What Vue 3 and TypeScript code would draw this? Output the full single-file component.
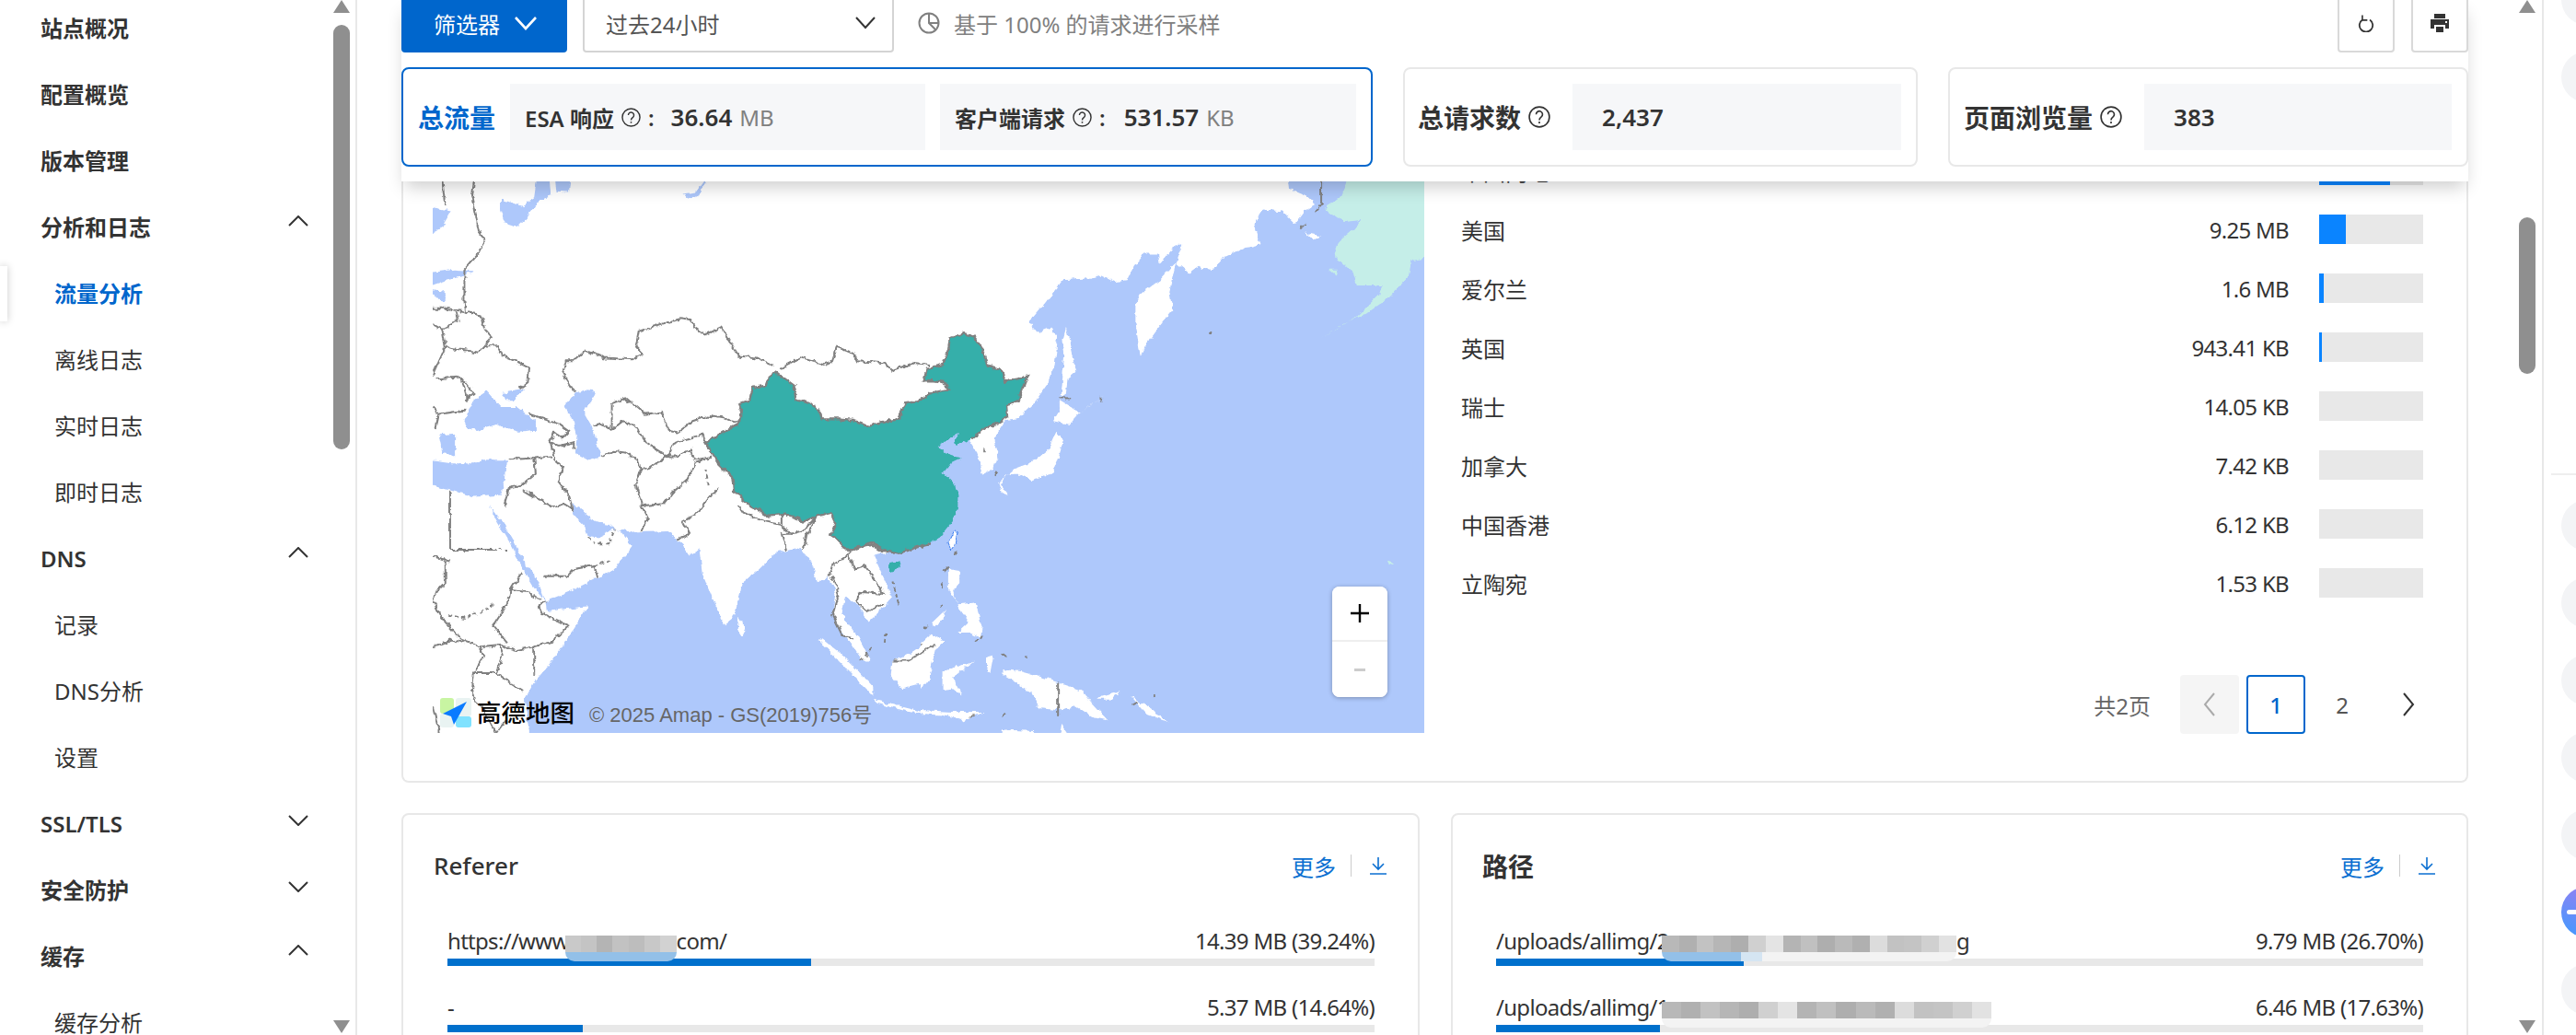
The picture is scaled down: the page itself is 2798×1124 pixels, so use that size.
<script setup lang="ts">
interface NavItem { label: string; level: 1 | 2; bold?: boolean; semi?: boolean; active?: boolean; chevron?: 'up' | 'down' }
const nav: NavItem[] = [
  { label: '站点概况', level: 1, bold: true },
  { label: '配置概览', level: 1, bold: true },
  { label: '版本管理', level: 1, bold: true },
  { label: '分析和日志', level: 1, bold: true, chevron: 'up' },
  { label: '流量分析', level: 2, active: true },
  { label: '离线日志', level: 2 },
  { label: '实时日志', level: 2 },
  { label: '即时日志', level: 2 },
  { label: 'DNS', level: 1, semi: true, chevron: 'up' },
  { label: '记录', level: 2 },
  { label: 'DNS分析', level: 2 },
  { label: '设置', level: 2 },
  { label: 'SSL/TLS', level: 1, semi: true, chevron: 'down' },
  { label: '安全防护', level: 1, bold: true, chevron: 'down' },
  { label: '缓存', level: 1, bold: true, chevron: 'up' },
  { label: '缓存分析', level: 2 },
]

const countries = [
  { name: '中国内地', value: '', pct: 68 },
  { name: '美国', value: '9.25 MB', pct: 25.6 },
  { name: '爱尔兰', value: '1.6 MB', pct: 4.4 },
  { name: '英国', value: '943.41 KB', pct: 2.6 },
  { name: '瑞士', value: '14.05 KB', pct: 0 },
  { name: '加拿大', value: '7.42 KB', pct: 0 },
  { name: '中国香港', value: '6.12 KB', pct: 0 },
  { name: '立陶宛', value: '1.53 KB', pct: 0 },
]

const refTones = ['#c9c9c9', '#c4c4c4', '#b4b4b4', '#c2c2c2', '#bdbdbd', '#c8c8c8', '#d2d2d2']
const pathTones = ['#b8b8b8', '#b0b0b0', '#c2c2c2', '#b6b6b6', '#aeaeae', '#d0d0d0', '#e4e4e4', '#b4b4b4', '#c0c0c0', '#aeaeae', '#bababa', '#b0b0b0', '#dcdcdc', '#c2c2c2', '#c4c4c4', '#d0d0d0', '#e2e2e2']

const seas = [
  '310,1600 290,1470 320,1420 370,1370 430,1290 490,1205 400,1215 360,1220 355,1190 440,1160 520,1125 570,1100 610,1060 630,1035 590,990 575,985 555,995 520,1010 490,1005 480,980 445,945 440,915 470,930 500,960 540,970 565,980 575,985 620,995 680,992 740,990 780,1025 810,1060 840,1040 850,1110 890,1200 920,1258 945,1240 965,1190 975,1140 1030,1100 1080,1055 1160,1040 1200,1090 1210,1140 1250,1120 1270,1170 1260,1230 1275,1260 1320,1310 1355,1360 1380,1360 1340,1290 1290,1230 1300,1180 1340,1200 1375,1250 1420,1210 1450,1180 1420,1120 1390,1060 1440,1050 1520,1040 1568,1025 1600,1025 1600,1600',
  '100,680 130,620 170,595 200,625 215,640 265,640 325,680 325,705 270,710 200,690 140,708 110,700',
  '220,600 285,590 260,620 230,620',
  '415,640 440,610 475,590 515,595 500,625 475,650 500,690 515,730 530,780 490,790 450,770 455,720 440,670',
  '-20,790 60,800 130,800 160,790 235,790 230,840 215,890 130,895 50,875 -20,860',
  '20,720 70,715 70,780 30,770',
  '180,920 215,960 250,1010 290,1080 330,1130 355,1190 320,1150 280,1090 240,1020 200,960',
  '-20,70 60,85 30,130 -20,155',
  '-20,260 70,250 135,255 80,270 -20,300',
  '-20,305 40,310 40,340 15,335',
  '180,20 215,50 280,70 320,45 330,-20 370,-20 375,40 340,50 300,100 265,130 230,120 215,85 215,50',
  '385,-20 435,-20 430,30 390,28',
  '785,35 830,30 870,-20 840,40 815,50',
]
const islandsA = [
  '1215,1300 1290,1370 1390,1460 1385,1430 1300,1350 1230,1300',
  '1390,1470 1500,1495 1568,1510 1500,1505 1400,1480',
  '1450,1360 1500,1340 1568,1300 1568,1420 1480,1440 1445,1400',
  '965,1235 990,1270 975,1290 960,1270',
]
const islandsB = [
  '680,320 740,280 790,230 770,310 780,365 740,410 700,460 680,495 665,400 665,350',
  '450,415 480,540 455,560 450,600 435,610 445,490 440,450',
  '430,620 495,655 460,690 410,680 430,650',
  '495,655 575,605 520,640',
  '420,710 440,740 425,790 410,825 345,850 310,830 270,830 245,860 270,890 250,885 240,855 290,815 350,795 395,760 415,720',
  '85,1100 120,1105 120,1140 100,1160 110,1195 85,1150',
  '115,1200 170,1195 190,1265 185,1295 150,1280 115,1280 150,1250 125,1220',
  '40,1250 80,1215 60,1250 35,1265',
  '0,1310 30,1285 75,1305 45,1330 30,1390 0,1440',
  '70,1390 165,1360 120,1390 100,1405 130,1460 100,1440 70,1445',
  '255,1385 310,1390 370,1405 420,1420 500,1445 530,1480 580,1530 530,1520 480,1490 420,1500 370,1495 340,1450 290,1420 255,1400',
  '0,1500 100,1505 200,1505 130,1530 80,1515 0,1510',
  '205,1350 225,1345 215,1395 205,1390',
  '250,1555 350,1560 360,1590 250,1590',
  '440,1535 460,1590 430,1590',
  '650,1460 700,1490 770,1535 700,1510',
  '560,1460 620,1445 590,1470 545,1470',
  '1190,145 1240,155 1215,165',
]
const bordersA = [
  '30,0 40,70',
  '130,0 125,40 135,90 145,140 165,165 140,210 100,250 100,300 100,340 105,370 150,380 165,420 185,440 160,470 205,465 220,495 260,510 305,530 300,570 270,590',
  '105,370 40,360 0,360', '75,370 80,395 30,420 40,470 10,530 0,550', '0,405 30,420', '40,470 145,485 160,470',
  '10,560 90,555 130,600 105,620', '90,555 110,620', '0,640 20,660 100,650', '20,660 10,700',
  '305,660 400,690 430,710 410,730 380,710 370,740 400,750 445,740 445,760',
  '410,545 420,510 440,510 480,480 540,500 630,505 660,490 640,470 650,425 720,405 780,390 815,395 825,415 860,435 910,415 965,495 1020,500 1075,525',
  '1095,530 1160,500 1230,520 1260,510 1275,470 1330,490 1340,510 1420,515 1450,535 1520,515 1568,520',
  '410,545 440,590 455,600',
  '510,690 530,685 565,705 565,630 610,615 670,660 720,655 745,705 775,710 820,680 870,665 930,675 970,685',
  '565,705 600,680 640,695 670,740 740,780 760,745 800,730 850,720 860,740',
  '535,780 570,765 610,770 650,795 655,820 680,815 740,780 770,780 815,760 825,790 860,785 880,780',
  '375,740 385,790 410,810 395,850 430,890 440,930 415,915',
  '655,820 640,860 655,905 660,925 680,960 660,990',
  '655,920 730,915 760,880 800,850 830,800 860,785', '900,870 870,900 830,945 790,965 810,1000 770,1015',
  '240,790 320,785 375,780', '320,785 325,830 285,860 240,870 225,920', '285,875 350,910 385,925 415,915',
  '55,880 55,1045 200,1045',
  '350,1120 425,1120 445,1100 510,1090 520,1125',
  '55,1075 0,1065',
  '40,1075 40,1140 10,1165 0,1190 30,1240 90,1300 150,1320 210,1315 265,1330 320,1320 380,1305 430,1260 345,1225 335,1205 355,1190',
  '280,1110 245,1160 240,1190 190,1260 235,1310', '245,1160 300,1165 340,1190',
  '150,1320 160,1350 130,1395 200,1395 220,1345 210,1315', '320,1320 320,1400', '200,1395 285,1445',
  '130,1395 125,1440 135,1480 170,1500', '0,1490 20,1565', '160,1500 200,1565 230,1530', '0,1320 60,1300 100,1310',
  '965,920 980,940 1050,965 1100,975 1100,945', '1100,975 1130,1000 1100,1000 1115,1045', '1130,1000 1170,990 1210,950 1180,1000 1170,1045',
  '1310,1060 1260,1090 1250,1120', '1310,1060 1330,1040 1380,1030 1420,1050', '1310,1060 1330,1100 1360,1090 1410,1150 1420,1170 1350,1165 1335,1190 1370,1220 1420,1200',
  '1260,1120 1280,1170 1260,1230 1290,1285 1325,1295', '1450,1360 1500,1360 1530,1345 1568,1320',
]
const dashedA = [
  '205,1045 245,1045', '510,1090 560,1075', '490,1010 520,1030 555,1030 575,985', '50,1230 100,1240 165,1215 190,1200', '860,815 870,860',
  '1450,1135 1470,1200', '1430,1280 1425,1310', '1385,1325 1350,1360',
]
const segmentsB = [
  '1240,0 1240,65 1222,85', '1175,135 1190,120', '430,615 465,615', '893,435 903,428', '555,615 560,620', '105,1060 115,1050',
  '75,1105 85,1093', '68,1140 68,1155', '62,1215 68,1203', '12,1270 22,1262', '170,1305 180,1300', '185,1298 190,1290',
  '250,1340 262,1348', '320,1348 330,1350', '718,1458 726,1458', '657,1485 672,1478', '250,1518 265,1510', '150,1520 170,1515',
  '0,1315 45,1318', '0,1350 10,1320', '425,1420 425,1515', '195,765 200,760', '228,838 235,825',
]
const chinaBorder = '1568,1030 1520,1040 1470,1055 1450,1050 1420,1045 1380,1025 1340,1040 1310,1050 1280,1020 1255,1005 1270,970 1255,940 1210,950 1170,965 1110,945 1060,950 1000,920 950,880 945,840 900,800 880,770 860,740 900,720 940,700 970,685 975,650 965,630 1000,620 1010,585 1050,580 1060,555 1082,540 1110,560 1140,580 1145,620 1190,630 1215,645 1230,675 1280,675 1330,680 1375,692 1420,682 1470,675 1490,630 1530,625 1570,600 1626,590 1615,570 1580,565 1549,565 1559,530 1610,520 1626,480 1631,445 1677,432 1707,440 1733,475 1748,520 1794,535 1806,568 1845,560 1875,552 1855,600 1845,625 1809,635 1812,670 1783,685 1743,700 1702,730'
const chinaFill = chinaBorder + ' 1651,750 1646,735 1661,715 1631,730 1590,750 1615,770 1666,785 1631,800 1610,825 1636,850 1656,880 1656,925 1636,970 1600,1010 1559,1030'
</script>

<template>
  <div class="app">
    <aside class="sidebar">
      <nav class="nav">
        <div v-for="item in nav" :key="item.label" class="nav-item" :class="[item.level === 2 ? 'sub' : 'top', { bold: item.bold, semi: item.semi, active: item.active }]">
          <span v-if="item.active" class="tab"></span>
          <span>{{ item.label }}</span>
          <svg v-if="item.chevron" class="nav-chev" viewBox="0 0 22 12" width="22" height="12" :class="item.chevron">
            <path d="M1 11 11 1l10 10" fill="none" stroke="#333" stroke-width="2" />
          </svg>
        </div>
      </nav>
      <div class="sbar">
        <svg viewBox="0 0 18 14" width="18" height="14"><path d="M9 0 18 14H0z" fill="#8f8f8f" /></svg>
        <div class="sbar-thumb left"></div>
        <svg class="sbar-end" viewBox="0 0 18 14" width="18" height="14"><path d="M9 14 18 0H0z" fill="#8f8f8f" /></svg>
      </div>
    </aside>

    <main class="main">
      <header class="sticky">
        <div class="toolbar">
          <button class="filter-btn">筛选器
            <svg viewBox="0 0 26 16" width="26" height="16"><path d="M2 2l11 12L24 2" fill="none" stroke="#fff" stroke-width="2.6" /></svg>
          </button>
          <div class="select">
            <span>过去24小时</span>
            <svg viewBox="0 0 22 14" width="22" height="14"><path d="M1 1l10 11L21 1" fill="none" stroke="#333" stroke-width="2" /></svg>
          </div>
          <svg class="pie" viewBox="0 0 24 24" width="24" height="26">
            <circle cx="12" cy="12" r="10.5" fill="none" stroke="#808080" stroke-width="2" />
            <path d="M12 1.5V12l7.5 7.5M12 12h10.5" fill="none" stroke="#808080" stroke-width="2" />
          </svg>
          <span class="sample">基于 100% 的请求进行采样</span>
          <button class="tool first">
            <svg viewBox="0 0 20 22" width="18" height="20"><path d="M14.5 7A8 8 0 1 1 5.5 7" fill="none" stroke="#333" stroke-width="2" /><path d="M5.5 1.5v6h6" fill="none" stroke="#333" stroke-width="1.8" /></svg>
          </button>
          <button class="tool">
            <svg viewBox="0 0 24 24" width="24" height="24"><path fill="#333" d="M6 2h12v5H6zM2 8h20v10h-4v-4H6v4H2zM8 16h8v6H8z" /><rect x="18" y="10" width="2" height="2" fill="#fff" /></svg>
          </button>
        </div>
        <div class="metrics">
          <section class="metric m1 selected">
            <span class="m-title blue">总流量</span>
            <div class="m-box b1">
              <span class="m-label">ESA 响应</span>
              <svg class="help" viewBox="0 0 22 22" width="21" height="21"><circle cx="11" cy="11" r="10" fill="none" stroke="#333" stroke-width="1.5" /><path d="M7.8 8.5a3.2 3.2 0 1 1 5 2.6c-1.2.9-1.8 1.4-1.8 3" fill="none" stroke="#333" stroke-width="1.5" /><circle cx="11" cy="16.6" r="1" fill="#333" /></svg>
              <span class="colon">:</span>
              <strong class="m-val">36.64</strong><span class="m-unit">MB</span>
            </div>
            <div class="m-box b2">
              <span class="m-label">客户端请求</span>
              <svg class="help" viewBox="0 0 22 22" width="21" height="21"><circle cx="11" cy="11" r="10" fill="none" stroke="#333" stroke-width="1.5" /><path d="M7.8 8.5a3.2 3.2 0 1 1 5 2.6c-1.2.9-1.8 1.4-1.8 3" fill="none" stroke="#333" stroke-width="1.5" /><circle cx="11" cy="16.6" r="1" fill="#333" /></svg>
              <span class="colon wide-colon">:</span>
              <strong class="m-val">531.57</strong><span class="m-unit">KB</span>
            </div>
          </section>
          <section class="metric m2">
            <span class="m-title">总请求数</span>
            <svg class="help big" viewBox="0 0 22 22" width="24" height="24"><circle cx="11" cy="11" r="10" fill="none" stroke="#333" stroke-width="1.5" /><path d="M7.8 8.5a3.2 3.2 0 1 1 5 2.6c-1.2.9-1.8 1.4-1.8 3" fill="none" stroke="#333" stroke-width="1.5" /><circle cx="11" cy="16.6" r="1" fill="#333" /></svg>
            <div class="m-box wide"><strong class="m-val">2,437</strong></div>
          </section>
          <section class="metric m3">
            <span class="m-title">页面浏览量</span>
            <svg class="help big" viewBox="0 0 22 22" width="24" height="24"><circle cx="11" cy="11" r="10" fill="none" stroke="#333" stroke-width="1.5" /><path d="M7.8 8.5a3.2 3.2 0 1 1 5 2.6c-1.2.9-1.8 1.4-1.8 3" fill="none" stroke="#333" stroke-width="1.5" /><circle cx="11" cy="16.6" r="1" fill="#333" /></svg>
            <div class="m-box wide"><strong class="m-val">383</strong></div>
          </section>
        </div>
      </header>

      <section class="geo-card">
        <div class="map">
          <svg class="map-svg" viewBox="0 0 3127 1565" preserveAspectRatio="none" width="1077" height="599">
            <defs>
              <filter id="rough" x="-2%" y="-2%" width="104%" height="104%">
                <feTurbulence type="fractalNoise" baseFrequency="0.05" numOctaves="3" seed="4" />
                <feDisplacementMap in="SourceGraphic" scale="16" xChannelSelector="R" yChannelSelector="G" />
              </filter>
            </defs>
            <rect width="3127" height="1565" fill="#fff" />
            <g filter="url(#rough)">
              <polygon v-for="(p, i) in seas" :key="'s' + i" :points="p" fill="#aec8fb" />
              <g transform="translate(1539 0) scale(1.0186 1)">
                <polygon fill="#aec8fb" points="1590,-20 1590,1600 0,1600 0,740 40,750 100,715 125,715 150,735 175,770 190,830 225,815 240,770 225,730 260,680 300,675 350,630 400,565 415,520 425,440 400,415 360,430 335,400 380,350 440,280 520,275 560,265 600,285 640,280 660,240 690,205 735,205 740,235 790,180 810,178 790,230 830,260 860,240 900,255 940,215 1000,190 1050,178 1030,120 1060,80 1120,85 1160,120 1190,85 1220,65 1190,40 1140,20 1135,-20" />
                <polygon fill="#c5eee8" points="1250,75 1300,45 1330,-20 1590,-20 1590,215 1520,225 1510,270 1450,330 1380,375 1310,405 1240,445 1350,385 1420,320 1430,295 1350,295 1340,260 1280,210 1295,170 1340,135 1365,110 1310,115 1270,90" />
                <polygon fill="#c5eee8" points="1445,1075 1465,1082 1450,1090" />
                <polygon fill="#c5eee8" points="1265,250 1290,250 1285,265" />
                <polygon v-for="(p, i) in islandsB" :key="'ib' + i" :points="p" fill="#fff" />
                <polygon points="105,990 115,995 105,1030 95,1045 85,1025" fill="#fff" stroke="#3a7df0" stroke-width="1" vector-effect="non-scaling-stroke" />
                <polyline v-for="(p, i) in segmentsB" :key="'b' + i" :points="p" fill="none" stroke="#808080" stroke-width="2" vector-effect="non-scaling-stroke" />
              </g>
              <polygon v-for="(p, i) in islandsA" :key="'ia' + i" :points="p" fill="#fff" />
              <polygon :points="chinaFill" fill="#35afaa" />
              <polygon points="1440,1085 1470,1080 1475,1095 1445,1105 1436,1095" fill="#35afaa" />
              <polyline :points="chinaBorder" fill="none" stroke="#808080" stroke-width="2.4" vector-effect="non-scaling-stroke" />
              <polyline v-for="(p, i) in bordersA" :key="'ba' + i" :points="p" fill="none" stroke="#808080" stroke-width="2" vector-effect="non-scaling-stroke" />
              <polyline v-for="(p, i) in dashedA" :key="'da' + i" :points="p" fill="none" stroke="#808080" stroke-width="2" stroke-dasharray="4 3" vector-effect="non-scaling-stroke" />
            </g>
          </svg>
          <div class="zoom-ctrl">
            <button class="zoom-btn"><svg viewBox="0 0 20 20" width="20" height="20"><path d="M10 0v20M0 10h20" stroke="#000" stroke-width="2.4" /></svg></button>
            <button class="zoom-btn minus"><svg viewBox="0 0 12 3" width="12" height="3"><path d="M0 1.5h12" stroke="#ccc" stroke-width="3" /></svg></button>
          </div>
          <div class="attrib">
            <svg class="amap-logo" viewBox="0 0 34 32" width="34" height="32">
              <rect x="0" y="0" width="15" height="17" rx="3" fill="#c8f5a2" />
              <rect x="0" y="17" width="15" height="15" rx="3" fill="#e9f3f2" />
              <rect x="17" y="0" width="17" height="20" rx="3" fill="#e9f3f2" />
              <rect x="17" y="20" width="17" height="12" rx="3" fill="#7fe2ff" />
              <path d="M29 4 3 17l9 3 3 9z" fill="#0a7bff" />
            </svg>
            <span class="amap-name">高德地图</span>
            <span class="amap-copy">© 2025 Amap - GS(2019)756号</span>
          </div>
        </div>
        <div class="geo-list">
          <div v-for="c in countries" :key="c.name" class="geo-row">
            <span class="geo-name">{{ c.name }}</span>
            <span class="geo-val">{{ c.value }}</span>
            <span class="geo-track"><i class="geo-fill" :style="{ width: c.pct + '%' }"></i></span>
          </div>
          <div class="pager">
            <span class="pg-total">共2页</span>
            <button class="pg disabled"><svg viewBox="0 0 14 26" width="14" height="26"><path d="M12 1 2 13l10 12" fill="none" stroke="#aaa" stroke-width="2" /></svg></button>
            <button class="pg current">1</button>
            <button class="pg">2</button>
            <button class="pg"><svg viewBox="0 0 14 26" width="14" height="26"><path d="M2 1l10 12L2 25" fill="none" stroke="#333" stroke-width="2" /></svg></button>
          </div>
        </div>
      </section>

      <div class="bottom">
        <section class="rank-card">
          <div class="rank-head">
            <h3 class="rank-title latin">Referer</h3>
            <a class="more">更多</a><span class="vline"></span>
            <svg viewBox="0 0 20 20" width="20" height="20"><path d="M10 1v12M4 8l6 6 6-6M1 19h18" fill="none" stroke="#0b6fd1" stroke-width="1.6" /></svg>
          </div>
          <div class="rank-row">
            <div class="rank-text">
              <span class="rank-url">https://www<span class="mask m-ref"><i v-for="(t, i) in refTones" :key="i" :style="{ background: t }"></i><b class="mask-low blue-low"></b></span>com/</span>
              <span class="rank-val">14.39 MB (39.24%)</span>
            </div>
            <div class="rank-track"><i :style="{ width: '39.24%' }"></i></div>
          </div>
          <div class="rank-row">
            <div class="rank-text"><span class="rank-url">-</span><span class="rank-val">5.37 MB (14.64%)</span></div>
            <div class="rank-track"><i :style="{ width: '14.64%' }"></i></div>
          </div>
        </section>
        <section class="rank-card">
          <div class="rank-head">
            <h3 class="rank-title">路径</h3>
            <a class="more">更多</a><span class="vline"></span>
            <svg viewBox="0 0 20 20" width="20" height="20"><path d="M10 1v12M4 8l6 6 6-6M1 19h18" fill="none" stroke="#0b6fd1" stroke-width="1.6" /></svg>
          </div>
          <div class="rank-row">
            <div class="rank-text">
              <span class="rank-url">/uploads/allimg/2<span class="mask m-p1"><i v-for="(t, i) in pathTones" :key="i" :style="{ background: t }"></i><b class="mask-low mix-low"></b></span>ng</span>
              <span class="rank-val">9.79 MB (26.70%)</span>
            </div>
            <div class="rank-track"><i :style="{ width: '26.7%' }"></i></div>
          </div>
          <div class="rank-row">
            <div class="rank-text">
              <span class="rank-url">/uploads/allimg/1<span class="mask m-p2"><i v-for="(t, i) in pathTones" :key="i" :style="{ background: t }"></i><b class="mask-low white-low"></b></span></span>
              <span class="rank-val">6.46 MB (17.63%)</span>
            </div>
            <div class="rank-track"><i :style="{ width: '17.63%' }"></i></div>
          </div>
        </section>
      </div>
    </main>

    <div class="sbar right">
      <svg viewBox="0 0 18 14" width="18" height="14"><path d="M9 0 18 14H0z" fill="#8f8f8f" /></svg>
      <div class="sbar-thumb rt"></div>
      <svg class="sbar-end" viewBox="0 0 18 14" width="18" height="14"><path d="M9 14 18 0H0z" fill="#8f8f8f" /></svg>
    </div>

    <aside class="strip">
      <div class="orb first-orb"></div>
      <div class="orb"></div>
      <div class="strip-line"></div>
      <div class="orb"></div>
      <div class="orb"></div>
      <div class="orb"></div>
      <div class="orb"></div>
      <div class="orb"></div>
      <div class="orb ai"></div>
      <div class="orb"></div>
    </aside>
  </div>
</template>

<style>
html, body { margin: 0; background: #fff; }
</style>

<style scoped>
* { box-sizing: border-box; }
.app {
  display: flex; width: 2798px; height: 1124px; overflow: hidden; background: #fff; color: #333;
  font-family: "Noto Sans", "Noto Sans CJK SC", sans-serif; font-size: 24px;
}
button { font: inherit; color: inherit; background: #fff; padding: 0; cursor: pointer; }

/* sidebar */
.sidebar { display: flex; width: 388px; flex: none; border-right: 2px solid #e8e8e8; height: 100%; }
.nav { width: 362px; flex: none; margin-top: -5px; }
.nav-item { position: relative; display: flex; align-items: center; height: 72px; padding-left: 44px; font-size: 24px; line-height: 24px; }
.nav-item.sub { padding-left: 59px; }
.nav-item.bold { font-weight: 700; }
.nav-item.semi { font-weight: 600; }
.nav-item.active { color: #0066cc; font-weight: 700; }
.tab { position: absolute; left: 0; top: 6px; width: 8px; height: 60px; background: #fff; box-shadow: 0 0 8px rgba(0, 0, 0, .22); }
.nav-chev { position: absolute; left: 313px; top: 23px; }
.nav-chev.down { top: 26px; transform: scaleY(-1); }

.sbar { display: flex; flex-direction: column; width: 18px; flex: none; height: 1124px; padding-bottom: 2px; }
.sbar-thumb { width: 18px; background: #8f8f8f; border-radius: 9px; }
.sbar-thumb.left { margin-top: 13px; height: 461px; }
.sbar-thumb.rt { margin-top: 222px; height: 170px; }
.sbar-end { margin-top: auto; }
.sbar.right { margin-right: 7px; }

/* main */
.main { width: 2348px; flex: none; padding: 0 55px 0 48px; overflow: hidden; height: 100%; }
.sticky { position: relative; z-index: 3; display: flow-root; height: 197px; background: #fff; box-shadow: 0 10px 18px -4px rgba(0, 0, 0, .2); }
.toolbar { display: flex; align-items: center; height: 64px; margin-top: -7px; }
.filter-btn {
  display: flex; align-items: center; gap: 15px; width: 180px; height: 64px; padding-left: 35px;
  border: none; border-radius: 4px; background: #0066cc; color: #fff;
}
.select {
  display: flex; align-items: center; justify-content: space-between; width: 338px; height: 64px; margin-left: 17px; padding: 0 18px 0 23px;
  border: 2px solid #d4d4d4; border-radius: 4px; color: #555;
}
.pie { margin-left: 26px; flex: none; }
.sample { margin-left: 15px; color: #808080; }
.tool { display: flex; align-items: center; justify-content: center; width: 62px; height: 64px; border: 2px solid #d9d9d9; border-radius: 4px; margin-left: 18px; }
.tool.first { margin-left: auto; }

.metrics { display: flex; justify-content: space-between; margin-top: 16px; }
.metric { display: flex; align-items: center; height: 108px; padding: 16px; border: 2px solid #e8e8e8; border-radius: 8px; background: #fff; }
.metric.selected { border-color: #0066cc; }
.m1 { width: 1055px; }
.m2 { width: 559px; padding-left: 14px; }
.m3 { width: 565px; padding-left: 15px; }
.m-title { font-size: 28px; font-weight: 700; white-space: nowrap; }
.m-title.blue { color: #0066cc; }
.m-box { display: flex; align-items: center; height: 72px; margin-left: 16px; padding-left: 16px; background: #f6f7f9; }
.b1 { width: 451px; }
.b2 { width: 452px; }
.m-label { font-weight: 600; white-space: nowrap; }
.help { flex: none; margin-left: 8px; }
.colon { margin: 0 18px 0 8px; font-weight: 600; }
.wide-colon { margin-right: 20px; }
.m-val { font-size: 26px; font-weight: 600; }
.m-unit { margin-left: 8px; color: #808080; }
.wide { flex: 1; margin-left: 24px; padding-left: 32px; }

/* geo card */
.geo-card {
  display: flex; height: 653px; padding: 0 47px 0 32px; border: 2px solid #e8e8e8; border-top: none; border-radius: 0 0 8px 8px;
}
.map { position: relative; width: 1077px; height: 599px; flex: none; }
.map-svg { display: block; }
.zoom-ctrl {
  position: absolute; left: 977px; top: 440px; width: 60px; height: 120px; display: flex; flex-direction: column;
  background: #fff; border-radius: 8px; box-shadow: 0 1px 5px rgba(0, 0, 0, .3); overflow: hidden;
}
.zoom-btn { display: flex; align-items: center; justify-content: center; height: 60px; border: none; border-bottom: 2px solid #eee; }
.zoom-btn.minus { border-bottom: none; flex: 1; }
.attrib { position: absolute; left: 8px; top: 561px; display: flex; align-items: center; height: 32px; }
.amap-logo { flex: none; }
.amap-name { margin-left: 6px; font-size: 26.5px; font-weight: 500; color: #000; line-height: 32px; }
.amap-copy { margin-left: 16px; font-family: "Liberation Sans", "Noto Sans CJK SC", sans-serif; font-size: 22px; color: #666; white-space: nowrap; }

.geo-list { flex: 1; margin-left: 40px; margin-top: -44px; }
.geo-row { display: flex; align-items: center; height: 64px; }
.geo-name { flex: 1; }
.geo-val { margin-right: 33px; letter-spacing: -.7px; }
.geo-track { width: 113px; height: 32px; background: #e8e8e8; flex: none; }
.geo-fill { display: block; height: 100%; background: #0a84ff; }

.pager { display: flex; align-items: center; justify-content: flex-end; gap: 8px; margin: 68px -16px 0 0; height: 64px; }
.pg-total { margin-right: 24px; color: #666; }
.pg { display: flex; align-items: center; justify-content: center; width: 64px; height: 64px; border: none; border-radius: 4px; color: #555; }
.pg.disabled { background: #f5f5f5; }
.pg.current { border: 2px solid #0066cc; color: #0066cc; font-weight: 500; }

/* ranked lists */
.bottom { display: flex; justify-content: space-between; margin-top: 33px; }
.rank-card { width: 1106px; height: 300px; padding: 0 47px 0 48px; border: 2px solid #e8e8e8; border-radius: 8px; }
.rank-card:last-child { width: 1105px; padding-left: 47px; }
.rank-head { display: flex; align-items: center; height: 36px; margin: 37px -14px 47px -15px; }
.rank-title { flex: 1; margin: 0; font-size: 28px; font-weight: 700; }
.rank-title.latin { font-size: 26px; font-weight: 500; }
.more { color: #0b6fd1; }
.vline { width: 1px; height: 24px; margin: 0 19px 0 16px; background: #ccc; }
.rank-row { height: 72px; }
.rank-text { display: flex; justify-content: space-between; align-items: center; height: 36px; padding-bottom: 3px; white-space: nowrap; letter-spacing: -.7px; }
.rank-url { display: flex; align-items: center; }
.rank-track { height: 8px; background: #e8e8e8; }
.rank-track i { display: block; height: 100%; background: #0070cc; }
.mask { position: relative; z-index: 1; display: flex; height: 18px; align-self: flex-start; margin-top: 11px; }
.mask i { flex: 1; display: block; }
.mask-low { position: absolute; left: 0; right: 0; top: 18px; height: 10px; border-radius: 0 0 10px 10px; }
.m-ref { width: 121px; margin-left: -4px; }
.m-p1 { width: 320px; margin-left: -8px; margin-right: -14px; }
.m-p2 { width: 358px; margin-left: -8px; }
.blue-low { background: #93c0e8; }
.mix-low { background: linear-gradient(90deg, #93c0e8 0, #93c0e8 27%, #d5e5f2 27%, #d5e5f2 34%, #f3f3f3 34%); }
.white-low { background: #f3f3f3; }

/* right strip */
.strip { flex: 1; height: 100%; border-left: 2px solid #e8e8e8; padding-left: 19px; overflow: hidden; }
.orb { position: relative; width: 55px; height: 55px; border-radius: 50%; background: #f3f4f6; margin-bottom: 29px; }
.first-orb { margin-top: -28px; }
.strip-line { width: 28px; height: 2px; margin: 403px 0 27px -11px; background: #eee; }
.orb.ai { background: linear-gradient(20deg, #3f9bff, #a07cf0); }
.orb.ai::after { content: ""; position: absolute; left: 6px; top: 25px; width: 30px; height: 5px; border-radius: 3px; background: #fff; }
</style>
